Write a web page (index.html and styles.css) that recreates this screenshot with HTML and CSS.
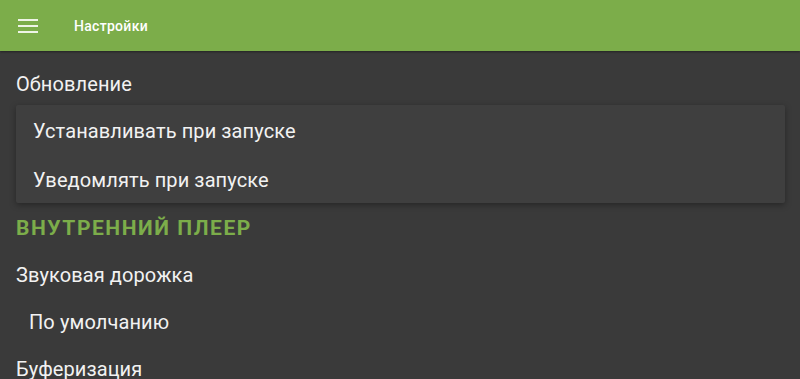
FILE: index.html
```html
<!DOCTYPE html>
<html lang="ru">

<head>
    <meta charset="UTF-8">
    <meta name="viewport" content="width=device-width, initial-scale=1.0">
    <title>Настройки</title>
    <link rel="stylesheet" href="styles.css">
</head>

<body>
    <header class="toolbar">
        <div class="menu-btn">
            <span></span>
            <span></span>
            <span></span>
        </div>
        <h1>Настройки</h1>
    </header>

    <main class="prefs">
        <p class="pref-title first">Обновление</p>
        <div class="popup">
            <p class="popup-item">Устанавливать при запуске</p>
            <p class="popup-item">Уведомлять при запуске</p>
        </div>

        <h2 class="category">ВНУТРЕННИЙ ПЛЕЕР</h2>

        <p class="pref-title">Звуковая дорожка</p>
        <p class="pref-value">По умолчанию</p>
        <p class="pref-title">Буферизация</p>
    </main>
</body>

</html>
```

FILE: styles.css
```css
* {
    margin: 0;
    padding: 0;
    box-sizing: border-box;
    font-family: Roboto, "Noto Sans", sans-serif;
}

body {
    background-color: #3a3a3a;
    color: #f2f2f2;
    overflow: hidden;
}

.toolbar {
    height: 51px;
    background-color: #7cad4a;
    display: flex;
    align-items: center;
    padding-left: 18px;
    box-shadow: 0 1px 2px rgba(0, 0, 0, 0.4);
}

.menu-btn {
    width: 20px;
    display: flex;
    flex-direction: column;
    gap: 4px;
}

.menu-btn span {
    display: block;
    height: 2px;
    background-color: #eef4e6;
}

.toolbar h1 {
    font-size: 14px;
    font-weight: 500;
    letter-spacing: 0.3px;
    color: white;
    margin-left: 36px;
    line-height: 20px;
}

.prefs {
    padding: 0 0 0 16px;
}

.pref-title,
.pref-value,
.popup-item {
    font-size: 20px;
    line-height: 24px;
    letter-spacing: 0.1px;
}

.pref-title {
    padding-top: 23px;
}

.pref-title.first {
    padding-top: 21px;
    padding-bottom: 9px;
}

.popup {
    background-color: #3f3f3f;
    margin-right: 15px;
    border-radius: 2px;
    box-shadow: 0 2px 6px rgba(0, 0, 0, 0.35);
}

.popup-item {
    padding: 14px 17px 11px;
}

.category {
    color: #7cad4a;
    font-size: 21px;
    font-weight: bold;
    letter-spacing: 1.55px;
    line-height: 24px;
    padding-top: 13px;
}

.pref-value {
    padding-top: 23px;
    padding-left: 13px;
}
```
